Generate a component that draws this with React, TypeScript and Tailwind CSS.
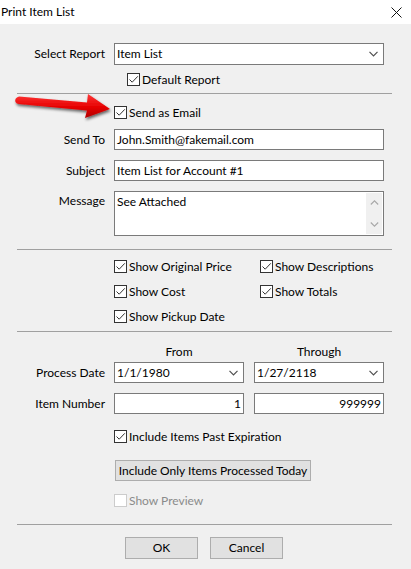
const font = { fontFamily: 'Lato, "Noto Sans", sans-serif' };

function Check({ checked = true, disabled = false }: { checked?: boolean; disabled?: boolean }) {
  return (
    <span
      className={`flex h-[13px] w-[13px] shrink-0 items-center justify-center border bg-white ${
        disabled ? 'border-[#cccccc]' : 'border-[#333333]'
      }`}
    >
      {checked && (
        <svg width="11" height="11" viewBox="0 0 11 11" aria-hidden="true">
          <path d="M1.5 5.5 L4.2 8.2 L9.8 2.3" fill="none" stroke="#333333" strokeWidth="1" />
        </svg>
      )}
    </span>
  );
}

function CheckRow({ label, checked = true, disabled = false }: { label: string; checked?: boolean; disabled?: boolean }) {
  return (
    <div className="flex h-[13px] items-center gap-[2px]">
      <Check checked={checked} disabled={disabled} />
      <span className={`whitespace-nowrap text-[12px] leading-none ${disabled ? 'text-[#8b8b8b]' : 'text-black'}`}>
        {label}
      </span>
    </div>
  );
}

function Chevron() {
  return (
    <svg width="9" height="6" viewBox="0 0 9 6" aria-hidden="true">
      <path d="M0.5 0.8 L4.5 4.8 L8.5 0.8" fill="none" stroke="#505050" strokeWidth="1.2" />
    </svg>
  );
}

function Select({ value, className }: { value: string; className: string }) {
  return (
    <div className={`flex items-center justify-between border border-[#7a7a7a] bg-white pl-[2px] pr-[5px] ${className}`}>
      <span className="text-[12px] leading-none text-black">{value}</span>
      <Chevron />
    </div>
  );
}

function TextBox({ value, className, right = false }: { value: string; className: string; right?: boolean }) {
  return (
    <div
      className={`flex items-center border border-[#7a7a7a] bg-white px-[2px] ${right ? 'justify-end' : ''} ${className}`}
    >
      <span className="text-[12px] leading-none text-black">{value}</span>
    </div>
  );
}

function Label({ text }: { text: string }) {
  return (
    <span className="w-[97px] shrink-0 whitespace-nowrap pr-[9px] text-right text-[12px] leading-none text-black">
      {text}
    </span>
  );
}

function Separator({ className }: { className: string }) {
  return <div className={`h-px w-[375px] bg-[#a0a0a0] ${className}`} />;
}

function RedArrow() {
  return (
    <svg className="absolute left-[-104px] top-[-21px]" width="105" height="40" viewBox="0 0 105 40" aria-hidden="true">
      <defs>
        <linearGradient id="arrowShade" x1="0" y1="0" x2="0" y2="1">
          <stop offset="0" stopColor="#ff3a3a" />
          <stop offset="0.55" stopColor="#e60000" />
          <stop offset="1" stopColor="#b00000" />
        </linearGradient>
        <filter id="arrowShadow" x="-20%" y="-40%" width="140%" height="180%">
          <feGaussianBlur in="SourceAlpha" stdDeviation="1.6" />
          <feOffset dx="1" dy="2" result="blur" />
          <feComponentTransfer>
            <feFuncA type="linear" slope="0.6" />
          </feComponentTransfer>
          <feMerge>
            <feMergeNode />
            <feMergeNode in="SourceGraphic" />
          </feMerge>
        </filter>
      </defs>
      <path
        d="M9 11.5 Q4 13 5.5 17 Q6.5 19 9 19 L77 25.5 L75 33 L100 24 L78 9 L77 17.5 Z"
        fill="url(#arrowShade)"
        filter="url(#arrowShadow)"
      />
    </svg>
  );
}

export default function App() {
  return (
    <div className="flex h-[569px] w-[411px] flex-col overflow-hidden bg-[#f0f0f0]" style={font}>
      {/* Title bar */}
      <div className="flex h-[24px] shrink-0 items-center justify-between bg-white pl-[1px] pr-[9px]">
        <span className="text-[12px] leading-none text-black">Print Item List</span>
        <svg width="11" height="11" viewBox="0 0 11 11" aria-hidden="true">
          <path d="M0.5 0.5 L10.5 10.5 M10.5 0.5 L0.5 10.5" stroke="#111111" strokeWidth="1" />
        </svg>
      </div>

      <div className="flex flex-col pl-[17px]">
        {/* Report */}
        <div className="mt-[19px] flex items-center">
          <Label text="Select Report" />
          <Select value="Item List" className="h-[22px] w-[270px]" />
        </div>
        <div className="ml-[110px] mt-[8px]">
          <CheckRow label="Default Report" />
        </div>
        <Separator className="mt-[7px]" />

        {/* Email */}
        <div className="relative ml-[97px] mt-[12px]">
          <RedArrow />
          <CheckRow label="Send as Email" />
        </div>
        <div className="mt-[10px] flex items-center">
          <Label text="Send To" />
          <TextBox value="John.Smith@fakemail.com" className="h-[21px] w-[270px]" />
        </div>
        <div className="mt-[10px] flex items-center">
          <Label text="Subject" />
          <TextBox value="Item List for Account #1" className="h-[21px] w-[270px]" />
        </div>
        <div className="mt-[10px] flex items-start">
          <span className="w-[97px] shrink-0 pr-[9px] pt-[4px] text-right text-[12px] leading-none text-black">Message</span>
          <div className="flex h-[45px] w-[270px] border border-[#7a7a7a] bg-white">
            <span className="flex-1 pl-[2px] pt-[4px] text-[12px] leading-none text-black">See Attached</span>
            <div className="my-px mr-px flex w-[16px] flex-col items-center justify-between bg-[#f0f0f0] py-[7px]">
              <svg width="9" height="5" viewBox="0 0 9 5" aria-hidden="true">
                <path d="M0.8 4.5 L4.5 0.8 L8.2 4.5" fill="none" stroke="#a8a8a8" strokeWidth="1.1" />
              </svg>
              <svg width="9" height="5" viewBox="0 0 9 5" aria-hidden="true">
                <path d="M0.8 0.5 L4.5 4.2 L8.2 0.5" fill="none" stroke="#a8a8a8" strokeWidth="1.1" />
              </svg>
            </div>
          </div>
        </div>
        <Separator className="mt-[13px]" />

        {/* Options */}
        <div className="ml-[97px] mt-[10px] grid w-[270px] grid-cols-[146px_1fr] gap-y-[12px]">
          <CheckRow label="Show Original Price" />
          <CheckRow label="Show Descriptions" />
          <CheckRow label="Show Cost" />
          <CheckRow label="Show Totals" />
          <CheckRow label="Show Pickup Date" />
        </div>
        <Separator className="mt-[8px]" />

        {/* Range */}
        <div className="ml-[97px] mt-[14px] flex h-[12px] items-center">
          <span className="w-[130px] text-center text-[12px] leading-none text-black">From</span>
          <span className="ml-[10px] w-[130px] text-center text-[12px] leading-none text-black">Through</span>
        </div>
        <div className="mt-[4px] flex items-center">
          <Label text="Process Date" />
          <Select value="1/1/1980" className="h-[21px] w-[130px]" />
          <Select value="1/27/2118" className="ml-[10px] h-[21px] w-[130px]" />
        </div>
        <div className="mt-[10px] flex items-center">
          <Label text="Item Number" />
          <TextBox value="1" right className="h-[21px] w-[130px]" />
          <TextBox value="999999" right className="ml-[10px] h-[21px] w-[130px]" />
        </div>
        <div className="ml-[97px] mt-[16px]">
          <CheckRow label="Include Items Past Expiration" />
        </div>
        <button
          type="button"
          className="ml-[98px] mt-[17px] flex h-[21px] w-[196px] items-center justify-center whitespace-nowrap border border-[#adadad] bg-[#e1e1e1] text-[12px] leading-none text-black"
        >
          Include Only Items Processed Today
        </button>
        <div className="ml-[97px] mt-[13px]">
          <CheckRow label="Show Preview" checked={false} disabled />
        </div>
        <Separator className="mt-[17px]" />

        {/* Actions */}
        <div className="ml-[108px] mt-[12px] flex gap-[12px]">
          <button
            type="button"
            className="flex h-[22px] w-[73px] items-center justify-center border border-[#adadad] bg-[#e1e1e1] text-[12px] leading-none text-black"
          >
            OK
          </button>
          <button
            type="button"
            className="flex h-[22px] w-[73px] items-center justify-center border border-[#adadad] bg-[#e1e1e1] text-[12px] leading-none text-black"
          >
            Cancel
          </button>
        </div>
      </div>
    </div>
  );
}
